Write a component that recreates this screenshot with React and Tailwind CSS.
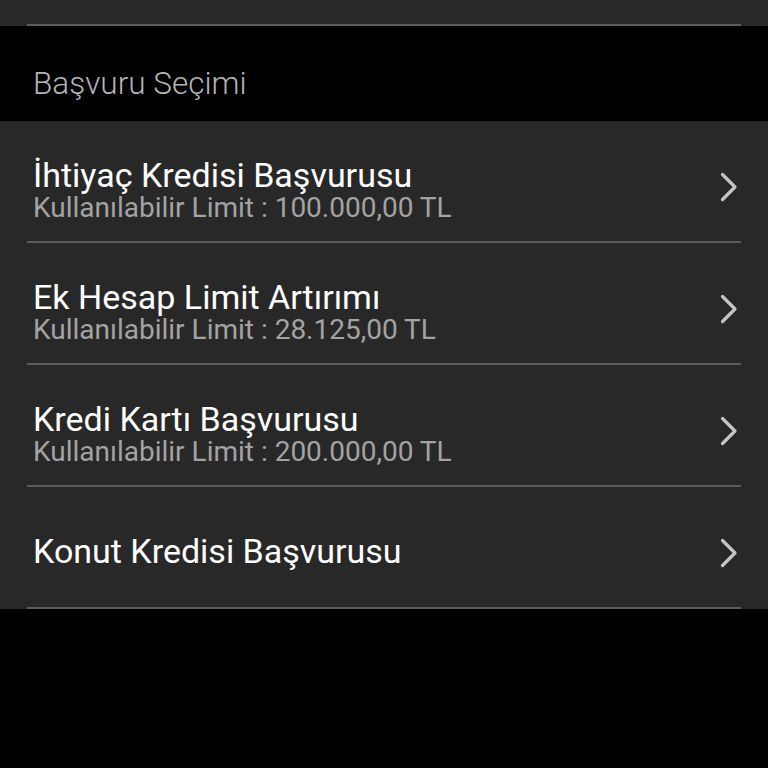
import React from "react";

const items = [
  { title: "İhtiyaç Kredisi Başvurusu", limit: "100.000,00 TL" },
  { title: "Ek Hesap Limit Artırımı", limit: "28.125,00 TL" },
  { title: "Kredi Kartı Başvurusu", limit: "200.000,00 TL" },
  { title: "Konut Kredisi Başvurusu", limit: null },
];

function Chevron() {
  return (
    <svg width="18" height="30" viewBox="0 0 18 30" className="shrink-0">
      <path
        d="M2.5 2.5 L15 15 L2.5 27.5"
        fill="none"
        stroke="#c4c4c4"
        strokeWidth="3.2"
        strokeLinecap="round"
        strokeLinejoin="round"
      />
    </svg>
  );
}

function Row({ title, limit }) {
  return (
    <div className="mx-[27px] h-[122px] flex items-center justify-between border-b-[2px] border-[#5c5c5c] pl-[6px] pr-[3px] pt-[12px]">
      <div className={limit ? "flex flex-col mt-[6px]" : "flex flex-col -mt-[4px]"}>
        <span className="text-[34px] leading-[36px] text-white">{title}</span>
        {limit && (
          <span className="text-[28px] leading-[30px] text-[#a3a3a3]">
            Kullanılabilir Limit : {limit}
          </span>
        )}
      </div>
      <Chevron />
    </div>
  );
}

export default function App() {
  return (
    <div
      className="w-[768px] h-[768px] bg-black overflow-hidden"
      style={{ fontFamily: "Roboto, 'Liberation Sans', sans-serif" }}
    >
      {/* previous section's tail */}
      <div className="bg-[#292828] h-[26px]">
        <div className="mx-[27px] h-[26px] border-b-[2px] border-[#5c5c5c]" />
      </div>

      <div className="h-[95px] flex items-center pl-[33px] pt-[20px]">
        <span className="text-[31.5px] font-light text-[#b4b4b4]">Başvuru Seçimi</span>
      </div>

      <div className="bg-[#292828]">
        {items.map((it) => (
          <Row key={it.title} title={it.title} limit={it.limit} />
        ))}
      </div>
    </div>
  );
}
